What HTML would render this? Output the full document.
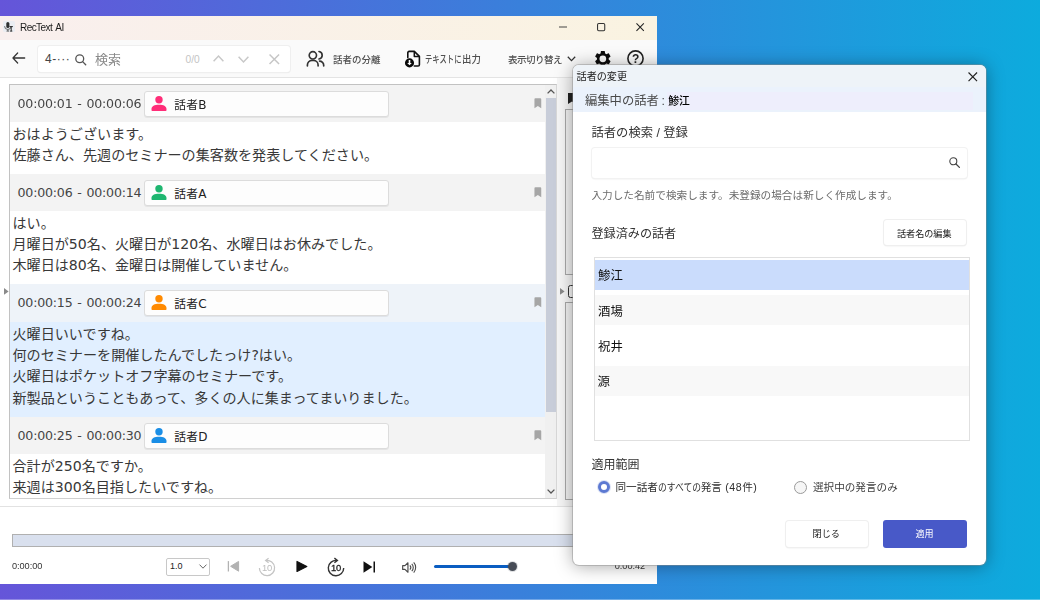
<!DOCTYPE html>
<html lang="ja">
<head>
<meta charset="utf-8">
<title>RecText AI</title>
<style>
*{box-sizing:border-box;margin:0;padding:0}
html,body{width:1040px;height:600px;overflow:hidden}
body{position:relative;background:linear-gradient(90deg,#6555d9 0%,#0dabdd 100%);font-family:"Liberation Sans","Noto Sans CJK JP",sans-serif;color:#333;-webkit-font-smoothing:antialiased}
.abs{position:absolute}
.t{position:absolute;white-space:nowrap;line-height:1}
.g{will-change:transform}
svg{position:absolute;overflow:visible}
#botline{left:0;top:599px;width:1040px;height:1px;background:rgba(255,255,255,.3)}
/* main window */
#win{left:0;top:16px;width:657px;height:568px;background:#fff;overflow:hidden}
#titlebar{left:0;top:0;width:657px;height:24px;background:linear-gradient(90deg,#f9efee 0%,#faf3e1 100%)}
#toolbar{left:0;top:24px;width:657px;height:38px;background:#fafafa;border-bottom:1px solid #e4e4e4}
#content{left:0;top:62px;width:657px;height:428px;background:#fff}
#sbox{left:38px;top:30px;width:251.500px;height:26px;background:#fff;border-radius:3px;box-shadow:0 0 0 1px #efefef,0 1px 1px rgba(0,0,0,.12)}
#list{left:9px;top:6px;width:548px;height:415px;background:#fff;border:1px solid #c2c2c2;border-right-color:#d8d8d8;border-bottom-color:#d0d0d0;box-shadow:inset 0 1px 0 #e4e4e4,inset 1px 0 0 #e4e4e4;overflow:hidden}
.hd{left:0;width:536px;height:37px;background:#f3f3f3}
.hd .ts{left:7.500px;top:12.600px;font-size:12.600px;letter-spacing:-.2px;word-spacing:1px;color:#444;font-family:"DejaVu Sans","Liberation Sans",sans-serif}
.hd .sp{left:133.500px;top:6px;width:245.500px;height:25.500px;background:#fdfdfd;border:1px solid #dcdcdc;border-radius:3px;box-shadow:0 1px 0 rgba(0,0,0,.06)}
.hd .nm{left:164.300px;top:13.700px;font-size:11.700px;color:#222;letter-spacing:.25px}
.hd .lt{font-family:"DejaVu Sans","Liberation Sans",sans-serif;font-size:12px;letter-spacing:0}
.tx{left:0;width:536px;background:#fff;font-size:14.100px;line-height:21.400px;color:#383838;padding:1.500px 0 0 2.500px;white-space:nowrap;font-family:"DejaVu Sans","Noto Sans CJK JP",sans-serif}
#player{left:0;top:490px;width:657px;height:78px;background:#fff;border-top:1px solid #e2e2e2}
/* dialog */
#dlg{will-change:transform;left:573px;top:65px;width:412.500px;height:500px;background:#fff;border-radius:6px;box-shadow:0 0 0 1px rgba(140,140,140,.45),0 1px 18px rgba(0,0,0,.36);overflow:hidden}
#dtitle{left:0;top:0;width:413px;height:22px;background:#eef3f8}
#dband{left:0;top:22px;width:413px;height:25px;background:#ebf2fc}
#dband2{left:94px;top:27px;width:306px;height:17.600px;background:#eeeefc}
.btn{background:#fff;border-radius:3px;box-shadow:0 0 0 1px #efefef,0 1px 1.500px rgba(0,0,0,.15);text-align:center;font-size:9px;color:#222}
</style>
</head>
<body>
<div id="win" class="abs">
  <div id="titlebar" class="abs">
    <div class="abs" style="left:3px;top:4.800px;width:11.500px;height:11.600px;background:#ebedf2;border-radius:1.500px"></div>
    <svg style="left:0;top:0" width="20" height="24" viewBox="0 0 20 24"><rect x="6.300" y="6" width="3.100" height="6" rx="1.550" fill="#2e2e2e"/><path d="M4.600 10.200a3.250 3.250 0 0 0 6.500 0" fill="none" stroke="#555" stroke-width=".9"/><path d="M7.850 13.400v1.600M6.500 15.100h2.700" fill="none" stroke="#555" stroke-width=".9"/><path d="M9.500 10.600h3.400M11.200 10.600v4.500M10.100 15.100h2.200" fill="none" stroke="#2e2e2e" stroke-width="1"/></svg>
    <div class="t g" style="left:19.600px;top:6.500px;font-size:10px;letter-spacing:-.56px;word-spacing:1.400px;color:#1c1c1c">RecText AI</div>
    <svg style="left:559px;top:9.700px" width="8" height="2" viewBox="0 0 8 2"><path d="M0 1h8" stroke="#444" stroke-width="1"/></svg>
    <svg style="left:597px;top:6.800px" width="8.300" height="8.300" viewBox="0 0 9 9"><rect x="0.600" y="0.600" width="7.800" height="7.800" rx="1.300" fill="none" stroke="#333" stroke-width="1.150"/></svg>
    <svg style="left:636px;top:6.800px" width="8.300" height="8.300" viewBox="0 0 9 9"><path d="M0.500 0.500l8 8M8.500 0.500l-8 8" stroke="#222" stroke-width="1.150"/></svg>
  </div>
  <div id="toolbar" class="abs">
    <svg style="left:12px;top:12px" width="13.200" height="12" viewBox="0 0 14 12" preserveAspectRatio="none"><path d="M13.5 6H1.2M6 1L1 6l5 5" fill="none" stroke="#333" stroke-width="1.3" stroke-linecap="round" stroke-linejoin="round"/></svg>
  </div>
  <div id="sbox" class="abs">
    <div class="t" style="left:7px;top:7px;font-size:12px;color:#444;letter-spacing:.5px">4-···</div>
    <svg style="left:37.400px;top:8px" width="11.400" height="11.400" viewBox="0 0 13 13"><circle cx="5.400" cy="5.400" r="4.500" fill="none" stroke="#555" stroke-width="1.500"/><path d="M8.700 8.700l3.500 3.500" stroke="#555" stroke-width="1.600" stroke-linecap="round"/></svg>
    <div class="t g" style="left:56.500px;top:6.800px;font-size:13px;color:#8a8a8a">検索</div>
    <div class="t" style="left:147.500px;top:9px;font-size:10.200px;color:#c4c4c4">0/0</div>
    <svg style="left:175px;top:9px" width="11" height="7" viewBox="0 0 11 7"><path d="M0.600 6.200L5.500 1l4.900 5.200" fill="none" stroke="#c8c8c8" stroke-width="1.500"/></svg>
    <svg style="left:199.700px;top:9.800px" width="11" height="7" viewBox="0 0 11 7"><path d="M0.600 0.800L5.500 6l4.900-5.200" fill="none" stroke="#c8c8c8" stroke-width="1.500"/></svg>
    <svg style="left:231px;top:7.700px" width="10.600" height="10.600" viewBox="0 0 10 10"><path d="M0.500 0.500l9 9M9.500 0.500l-9 9" stroke="#c6c6c6" stroke-width="1.400"/></svg>
  </div>
  <div class="abs" style="left:0;top:24px;width:657px;height:38px">
    <svg style="left:302px;top:6px" width="26" height="26" viewBox="0 0 26 26" fill="none" stroke="#333" stroke-width="1.650" stroke-linecap="round"><circle cx="10.850" cy="9.300" r="3.650"/><path d="M5.400 19.900v-1a4.500 4.500 0 0 1 4.500-4.500h1.700a4.500 4.500 0 0 1 4.500 4.500v1"/><path d="M17 5.500a3.800 3.800 0 0 1 0 7.500"/><path d="M17.500 15.100a4.200 4.200 0 0 1 4.200 4.200v0.600"/></svg>
    <div class="t g" style="left:333px;top:15px;font-size:9.500px;color:#505050;font-weight:500">話者の分離</div>
    <svg style="left:400px;top:6px" width="26" height="26" viewBox="0 0 26 26"><path d="M7.800 11.400V6.700a1.300 1.300 0 0 1 1.300-1.300h5.200l5.100 5v8.300a1.300 1.300 0 0 1-1.300 1.300h-3.800" fill="none" stroke="#111" stroke-width="1.600" stroke-linecap="round" stroke-linejoin="round"/><path d="M14.300 5.600v4.800h4.900" fill="none" stroke="#111" stroke-width="1.500" stroke-linejoin="round"/><circle cx="9.500" cy="16.900" r="4.550" fill="#0a0a0a"/><path d="M8.700 14h1.600v2.900h1.500L9.500 19.300 7.200 16.900h1.500z" fill="#fff"/></svg>
    <div class="t g" style="left:425px;top:14.500px;font-size:10px;color:#505050;font-weight:500"><span style="display:inline-block;width:36.800px;height:10px;vertical-align:top"><span style="display:inline-block;transform:scaleX(.736);transform-origin:0 0">テキストに</span></span><span style="display:inline-block;transform:scaleX(.94);transform-origin:0 0">出力</span></div>
    <div class="t g" style="left:508px;top:15px;font-size:9.500px;color:#505050;font-weight:500;letter-spacing:-.5px">表示切り替え</div>
    <svg style="left:567px;top:16px" width="9" height="6" viewBox="0 0 9 6"><path d="M0.8 0.8L4.5 4.6 8.2 0.8" fill="none" stroke="#333" stroke-width="1.3"/></svg>
    <svg style="left:592.900px;top:9.100px" width="19.700" height="19.700" viewBox="0 0 24 24"><path fill="#0c0c0c" fill-rule="evenodd" d="M19.140 12.940c.04-.3.060-.61.060-.94 0-.32-.02-.64-.07-.94l2.030-1.580a.49.490 0 0 0 .12-.61l-1.920-3.320a.488.488 0 0 0-.59-.22l-2.390.96c-.5-.38-1.030-.7-1.620-.94l-.36-2.540a.484.484 0 0 0-.48-.41h-3.840c-.24 0-.43.170-.47.410l-.36 2.540c-.59.240-1.130.570-1.620.940l-2.390-.96c-.22-.08-.47 0-.59.220L2.740 8.870c-.12.210-.08.470.12.610l2.030 1.580c-.05.300-.09.630-.09.940s.02.640.07.940l-2.030 1.580a.49.490 0 0 0-.12.610l1.920 3.320c.12.220.37.290.59.220l2.390-.96c.5.380 1.030.7 1.620.94l.36 2.540c.05.240.24.410.48.410h3.840c.24 0 .44-.17.470-.41l.36-2.540c.59-.24 1.130-.56 1.620-.94l2.390.96c.22.080.47 0 .59-.22l1.920-3.320c.12-.22.070-.47-.12-.61l-2.010-1.580zM12 16.100a4.100 4.100 0 1 1 0-8.200 4.100 4.100 0 0 1 0 8.200z"/></svg>
    <svg style="left:627.300px;top:9.600px" width="17" height="17" viewBox="0 0 17 17"><circle cx="8.500" cy="8.500" r="7.600" fill="none" stroke="#222" stroke-width="1.600"/><text x="8.600" y="12.700" font-size="12" font-weight="bold" text-anchor="middle" fill="#222" font-family="Liberation Sans, sans-serif">?</text></svg>
  </div>
  <div id="content" class="abs">
<div id="list" class="abs">
<div class="hd abs" style="top:0px;background:#f3f3f3"><div class="t ts">00:00:01 - 00:00:06</div><div class="sp abs"></div><svg style="left:141px;top:11px" width="16" height="16" viewBox="0 0 16 16"><circle cx="8" cy="3.700" r="3.700" fill="#ff2d78"/><path d="M0.500 14.200v-1.200c0-2.700 3-4.200 7.500-4.200s7.500 1.500 7.500 4.200v1.200a.8.800 0 0 1-.8.800H1.300a.8.800 0 0 1-.8-.8z" fill="#ff2d78"/></svg><div class="t nm">話者<span class="lt">B</span></div><svg style="left:523.700px;top:12.600px" width="7.700" height="10.400" viewBox="0 0 8 11"><path d="M0.400 1.200a1 1 0 0 1 1-1h5.200a1 1 0 0 1 1 1v9.600L4 8.600 0.400 10.800z" fill="#a6a6a6"/></svg></div>
<div class="tx abs" style="top:37px;height:52px;background:#fff">おはようございます。<br>佐藤さん、先週のセミナーの集客数を発表してください。</div>
<div class="hd abs" style="top:89px;background:#f3f3f3"><div class="t ts">00:00:06 - 00:00:14</div><div class="sp abs"></div><svg style="left:141px;top:11px" width="16" height="16" viewBox="0 0 16 16"><circle cx="8" cy="3.700" r="3.700" fill="#1eb670"/><path d="M0.500 14.200v-1.200c0-2.700 3-4.200 7.500-4.200s7.500 1.500 7.500 4.200v1.200a.8.800 0 0 1-.8.800H1.300a.8.800 0 0 1-.8-.8z" fill="#1eb670"/></svg><div class="t nm">話者<span class="lt">A</span></div><svg style="left:523.700px;top:12.600px" width="7.700" height="10.400" viewBox="0 0 8 11"><path d="M0.400 1.200a1 1 0 0 1 1-1h5.200a1 1 0 0 1 1 1v9.600L4 8.600 0.400 10.800z" fill="#a6a6a6"/></svg></div>
<div class="tx abs" style="top:126px;height:74px;background:#fff">はい。<br>月曜日が50名、火曜日が120名、水曜日はお休みでした。<br>木曜日は80名、金曜日は開催していません。</div>
<div class="hd abs" style="top:199.300px;height:37.700px;background:#eef3f9"><div class="t ts">00:00:15 - 00:00:24</div><div class="sp abs"></div><svg style="left:141px;top:11px" width="16" height="16" viewBox="0 0 16 16"><circle cx="8" cy="3.700" r="3.700" fill="#ff8a00"/><path d="M0.500 14.200v-1.200c0-2.700 3-4.200 7.500-4.200s7.500 1.500 7.500 4.200v1.200a.8.800 0 0 1-.8.800H1.300a.8.800 0 0 1-.8-.8z" fill="#ff8a00"/></svg><div class="t nm">話者<span class="lt">C</span></div><svg style="left:523.700px;top:12.600px" width="7.700" height="10.400" viewBox="0 0 8 11"><path d="M0.400 1.200a1 1 0 0 1 1-1h5.200a1 1 0 0 1 1 1v9.600L4 8.600 0.400 10.800z" fill="#a6a6a6"/></svg></div>
<div class="tx abs" style="top:237px;height:95px;background:#e1efff">火曜日いいですね。<br>何のセミナーを開催したんでしたっけ?はい。<br>火曜日はポケットオフ字幕のセミナーです。<br>新製品ということもあって、多くの人に集まってまいりました。</div>
<div class="hd abs" style="top:332px;background:#f3f3f3"><div class="t ts">00:00:25 - 00:00:30</div><div class="sp abs"></div><svg style="left:141px;top:11px" width="16" height="16" viewBox="0 0 16 16"><circle cx="8" cy="3.700" r="3.700" fill="#1a8ee6"/><path d="M0.500 14.200v-1.200c0-2.700 3-4.200 7.500-4.200s7.500 1.500 7.500 4.200v1.200a.8.800 0 0 1-.8.800H1.300a.8.800 0 0 1-.8-.8z" fill="#1a8ee6"/></svg><div class="t nm">話者<span class="lt">D</span></div><svg style="left:523.700px;top:12.600px" width="7.700" height="10.400" viewBox="0 0 8 11"><path d="M0.400 1.200a1 1 0 0 1 1-1h5.200a1 1 0 0 1 1 1v9.600L4 8.600 0.400 10.800z" fill="#a6a6a6"/></svg></div>
<div class="tx abs" style="top:369px;height:60px;background:#fff">合計が250名ですか。<br>来週は300名目指したいですね。</div>

<div class="abs" style="left:534.500px;top:0;width:12.500px;height:414px;background:#f0f0f0"></div>
<div class="abs" style="left:536.300px;top:13px;width:9.500px;height:314.400px;background:#c8cdd9"></div>
<svg style="left:536.800px;top:4.200px" width="8" height="5" viewBox="0 0 8 5"><path d="M0.600 4.400L4 1l3.400 3.400" fill="none" stroke="#555" stroke-width="1.300"/></svg>
<svg style="left:536.800px;top:404.300px" width="8" height="5" viewBox="0 0 8 5"><path d="M0.600 0.600L4 4l3.400-3.400" fill="none" stroke="#555" stroke-width="1.300"/></svg>
</div>
<svg style="left:4px;top:210px" width="4.600" height="6.800" viewBox="0 0 5 7" preserveAspectRatio="none"><path d="M0 0l5 3.500L0 7z" fill="#8a8a8a"/></svg>
<!-- right panel fragments -->
<div class="abs" style="left:557px;top:0;width:100px;height:428px;background:#f6f6f6"></div>
<svg style="left:560px;top:210.300px" width="4.600" height="6.800" viewBox="0 0 5 7" preserveAspectRatio="none"><path d="M0 0l5 3.500L0 7z" fill="#8a8a8a"/></svg>
<svg style="left:568px;top:15px" width="8" height="11" viewBox="0 0 8 11"><path d="M0 0h8v11L4 8.500 0 11z" fill="#222"/></svg>
<div class="abs" style="left:565px;top:31px;width:90px;height:166px;background:#f1f1f1;border:1px solid #a8a8a8"></div>
<div class="abs" style="left:567.800px;top:207.300px;width:12px;height:12.400px;border:1.700px solid #333;border-radius:2.500px"></div>
<div class="abs" style="left:565px;top:224px;width:90px;height:198px;background:#f1f1f1;border:1px solid #a8a8a8"></div>
</div>
<div id="player" class="abs">
  <div class="abs" style="left:12px;top:27px;width:640px;height:13px;background:#d9e0ee;border:1px solid #b0b0b0"></div>
  <div class="t" style="left:12px;top:54.500px;font-size:9.200px;color:#333;letter-spacing:-.05px">0:00:00</div>
  <div class="abs" style="left:166px;top:51px;width:44px;height:18px;background:#fff;border:1px solid #c8c8c8;border-radius:2px"></div>
  <div class="t" style="left:170px;top:55px;font-size:9px;color:#222">1.0</div>
  <svg style="left:199px;top:57px" width="8" height="5" viewBox="0 0 8 5"><path d="M0.500 0.600L4 4.200l3.500-3.600" fill="none" stroke="#666" stroke-width="1"/></svg>
  <svg style="left:227px;top:53.200px" width="13" height="13" viewBox="0 0 13 13"><path d="M1.400 1.100v10.400" stroke="#b2b2b2" stroke-width="1.300"/><path d="M11.600 1.400v9.800L3.600 6.300z" fill="#b2b2b2" stroke="#b2b2b2" stroke-width="1" stroke-linejoin="round"/></svg>
  <svg style="left:256.500px;top:50.100px" width="20" height="20" viewBox="0 0 20 20"><path d="M9 3.450a7.600 7.600 0 1 1-6.600 7.550" fill="none" stroke="#c4c4c4" stroke-width="1.200"/><path d="M11.600 1.200L8.600 3.400l3 2.300" fill="none" stroke="#c4c4c4" stroke-width="1.200"/><text x="10" y="14.300" font-size="9.400" letter-spacing="-.3" text-anchor="middle" fill="#bdbdbd" font-family="Liberation Sans, sans-serif">10</text></svg>
  <svg style="left:296px;top:53.300px" width="12" height="13" viewBox="0 0 12 13"><path d="M1 1.500v10L10.800 6.500z" fill="#111" stroke="#111" stroke-width="1.200" stroke-linejoin="round"/></svg>
  <svg style="left:325.600px;top:50.100px" width="20" height="20" viewBox="0 0 20 20"><path d="M11 3.450a7.700 7.700 0 1 0 6.700 7.550" fill="none" stroke="#333" stroke-width="1.400"/><path d="M8.400 1.100l3 2.300-3 2.400" fill="none" stroke="#333" stroke-width="1.400"/><text x="10" y="14.300" font-size="9.400" letter-spacing="-.3" text-anchor="middle" fill="#222" stroke="#222" stroke-width=".3" font-family="Liberation Sans, sans-serif">10</text></svg>
  <svg style="left:363px;top:54px" width="12.200" height="12" viewBox="0 0 13 12" preserveAspectRatio="none"><path d="M12 0.500v11" stroke="#111" stroke-width="1.600"/><path d="M0.500 0.300v11.400L10 6z" fill="#111"/></svg>
  <svg style="left:402px;top:54.800px" width="14.400" height="11" viewBox="0 0 15 11" preserveAspectRatio="none" stroke-linejoin="round"><path d="M0.700 3.600h2.400L6.200 0.800v9.400L3.100 7.400H0.700z" fill="none" stroke="#4a4a4a" stroke-width="1.200"/><path d="M8.200 3.400a3 3 0 0 1 0 4.200M10.200 1.800a5.200 5.200 0 0 1 0 7.400M12.200 0.400a7.400 7.400 0 0 1 0 10.200" fill="none" stroke="#4a4a4a" stroke-width="1.150"/></svg>
  <div class="abs" style="left:433.500px;top:57.700px;width:76px;height:3.200px;background:#0a5dc1;border-radius:1.600px"></div>
  <div class="abs" style="left:507.500px;top:54.800px;width:9px;height:9px;background:#474c56;border-radius:50%;box-shadow:0 0 0 1px rgba(71,76,86,.18)"></div>
  <div class="t" style="left:614.800px;top:54.500px;font-size:9.200px;color:#333;letter-spacing:-.05px">0:00:42</div>
</div>
</div>
<div id="dlg" class="abs">
  <div id="dtitle" class="abs"></div>
  <div class="t" style="left:3.600px;top:7.300px;font-size:10.100px;color:#222">話者の変更</div>
  <svg style="left:394.600px;top:6.500px" width="9.600" height="9.600" viewBox="0 0 9 9"><path d="M0.500 0.500l8 8M8.500 0.500l-8 8" stroke="#222" stroke-width="1.100"/></svg>
  <div id="dband" class="abs"></div>
  <div id="dband2" class="abs"></div>
  <div class="t" style="left:12px;top:29.500px;font-size:12.300px;color:#4a4a4a">編集中の話者<span style="margin:0 3.400px 0 2.600px">:</span><span style="color:#000;font-size:10.800px;font-weight:500">鯵江</span></div>
  <div class="t" style="left:18.500px;top:62px;font-size:12.300px;color:#333">話者の検索 / 登録</div>
  <div class="abs" style="left:18.500px;top:83px;width:375px;height:29.600px;background:#fff;border-radius:3px;box-shadow:0 0 0 1px #f2f2f2,0 1px 1.500px rgba(0,0,0,.15)"></div>
  <svg style="left:375.600px;top:92.400px" width="11" height="11" viewBox="0 0 11 11"><circle cx="4.300" cy="4.300" r="3.500" fill="none" stroke="#444" stroke-width="1.100"/><path d="M7 7l3.400 3.400" stroke="#444" stroke-width="1.300" stroke-linecap="round"/></svg>
  <div class="t" style="left:18.400px;top:124.600px;font-size:10.650px;color:#6c6c6c">入力した名前で検索します。未登録の場合は新しく作成します。</div>
  <div class="t" style="left:18.500px;top:163px;font-size:12.100px;color:#333">登録済みの話者</div>
  <div class="btn abs" style="left:311px;top:155px;width:81.500px;height:25px;line-height:28.600px;font-size:9.100px;text-indent:-1px">話者名の編集</div>
  <div class="abs" style="left:21px;top:192px;width:375.500px;height:184px;background:#fff;border:1px solid #e0e0e0">
    <div class="abs" style="left:0;top:2px;width:373.500px;height:29.600px;background:#cadcfc"></div>
    <div class="abs" style="left:0;top:37.300px;width:373.500px;height:29.800px;background:#f8f8f8"></div>
    <div class="abs" style="left:0;top:107.800px;width:373.500px;height:29.800px;background:#f8f8f8"></div>
    <div class="t" style="left:3px;top:12.400px;font-size:12.400px;color:#111">鯵江</div>
    <div class="t" style="left:3px;top:47.800px;font-size:12.400px;color:#111">酒場</div>
    <div class="t" style="left:3px;top:83.100px;font-size:12.400px;color:#111">祝井</div>
    <div class="t" style="left:2.500px;top:118.400px;font-size:12.400px;color:#111">源</div>
  </div>
  <div class="t" style="left:18.500px;top:394.200px;font-size:12px;color:#333">適用範囲</div>
  <div class="abs" style="left:24.800px;top:416px;width:12.400px;height:12.400px;border:3.400px solid #5c79d2;border-radius:50%;background:#fff;box-shadow:0 0 0 1px rgba(92,121,210,.22)"></div>
  <div class="t" style="left:42.500px;top:417px;font-size:10.600px;color:#2e2e2e">同一話者<span style="display:inline-block;transform:scaleX(.83);transform-origin:0 0;margin-right:-9px">のすべての</span>発言<span style="letter-spacing:.5px"> (48件)</span></div>
  <div class="abs" style="left:221px;top:416px;width:13px;height:13px;border:1px solid #9a9a9a;border-radius:50%;background:#f6f6f6"></div>
  <div class="t" style="left:240px;top:417px;font-size:10.600px;color:#3c3c3c">選択中の発言のみ</div>
  <div class="btn abs" style="left:213px;top:456px;width:81.500px;height:25.600px;line-height:27.500px;font-size:9.200px;text-indent:-1px">閉じる</div>
  <div class="abs" style="left:310px;top:455px;width:84px;height:27.500px;line-height:29.500px;background:#4859c8;border-radius:3px;text-align:center;color:#fff;font-size:9px;text-indent:-1px">適用</div>
</div>
<div id="botline" class="abs"></div>
</body>
</html>
